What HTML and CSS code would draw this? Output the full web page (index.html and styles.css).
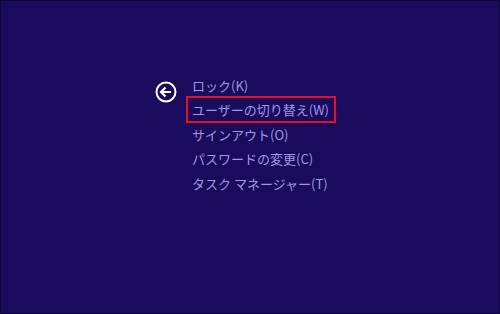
FILE: index.html
```html
<!DOCTYPE html>
<html lang="ja">
<head>
<meta charset="utf-8">
<link rel="stylesheet" href="styles.css">
</head>
<body>
<div class="screen">
  <div class="menu">
    <div class="back">
      <svg width="22" height="22" viewBox="0 0 22 22">
        <circle cx="11" cy="11" r="9.5" fill="none" stroke="#ffffff" stroke-width="2"/>
        <path d="M6 11 H16 M10.5 6.5 L6 11 L10.5 15.5" fill="none" stroke="#ffffff" stroke-width="2.2" stroke-linecap="butt" stroke-linejoin="miter"/>
      </svg>
    </div>
    <ul class="items">
      <li class="item">ロック(K)</li>
      <li class="item selected">ユーザーの切り替え(W)</li>
      <li class="item">サインアウト(O)</li>
      <li class="item">パスワードの変更(C)</li>
      <li class="item">タスク マネージャー(T)</li>
    </ul>
  </div>
</div>
</body>
</html>
```
FILE: styles.css
```css
html, body {
  margin: 0;
  padding: 0;
  width: 500px;
  height: 314px;
  overflow: hidden;
  background: #180b57;
}
.screen {
  box-sizing: border-box;
  width: 500px;
  height: 314px;
  border: 1px solid #0d0635;
  background: #1a0b5c;
  padding: 72px 0 0 154px;
}
.menu {
  display: flex;
  gap: 13px;
  align-items: flex-start;
}
.back {
  width: 22px;
  height: 22px;
  margin-top: 8px;
}
.back svg { display: block; }
.items {
  list-style: none;
  margin: 0;
  padding: 0;
  display: flex;
  flex-direction: column;
}
.item {
  font-family: "Noto Sans CJK JP", "Noto Sans", sans-serif;
  font-size: 13px;
  line-height: 16.5px;
  color: #a495e6;
  padding: 2.5px 4px 1.5px;
  margin-left: -4px;
  border: 2px solid transparent;
  width: max-content;
}
.item.selected {
  border-color: #e0112a;
  padding: 4px 5px 2.5px 4px;
  margin: -1.5px 0 -1px -4px;
}
```
